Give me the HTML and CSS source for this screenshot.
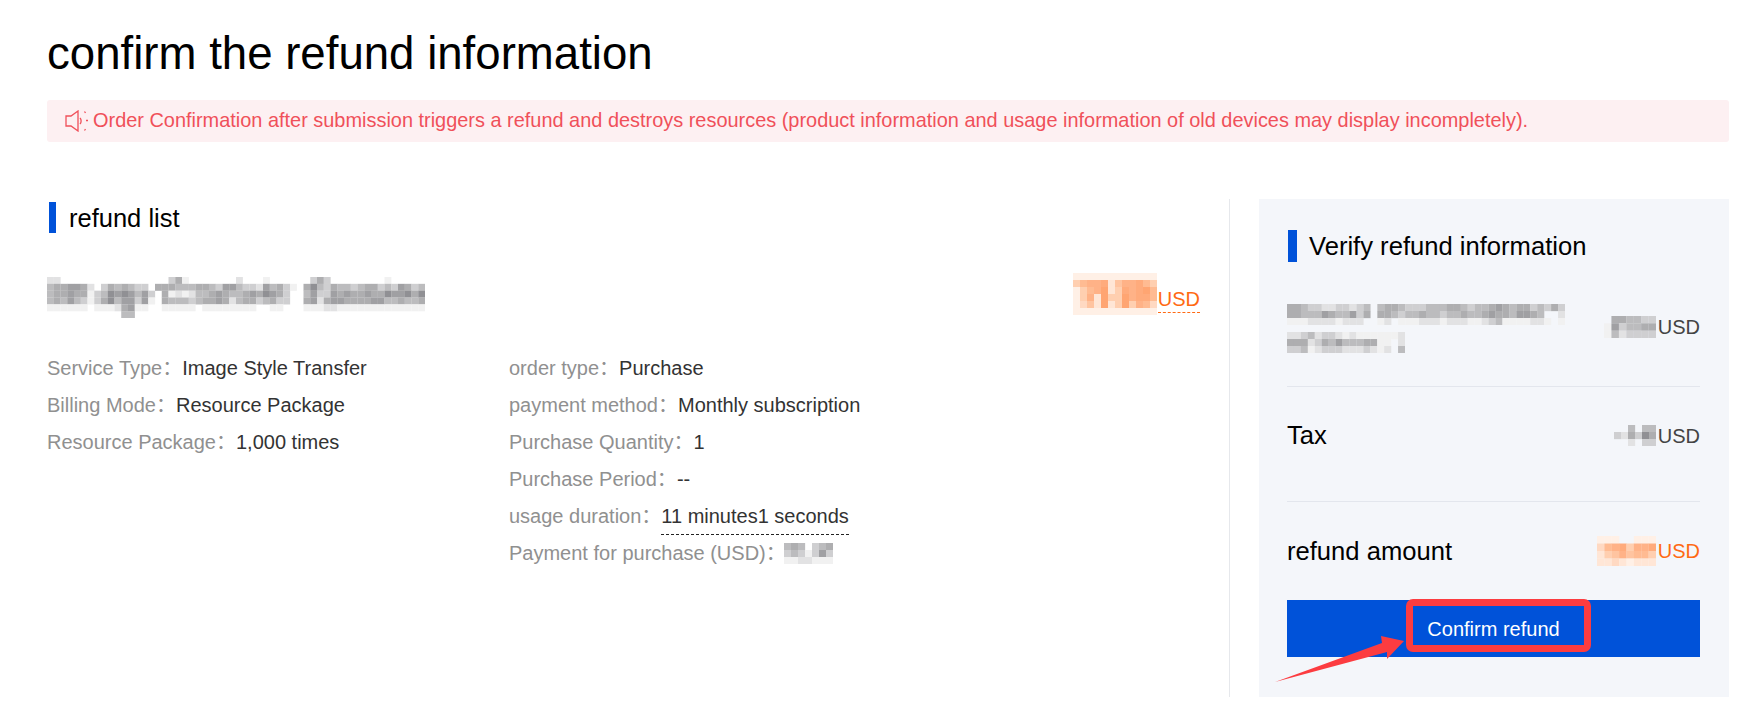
FILE: index.html
```html
<!DOCTYPE html>
<html lang="en">
<head>
<meta charset="utf-8">
<title>confirm the refund information</title>
<link rel="stylesheet" href="styles.css">
</head>
<body>
<main class="page">
  <h1 class="page-title">confirm the refund information</h1>
  <div class="notice">
    <svg class="notice-icon" width="24" height="22" viewBox="0 0 24 22" fill="none" stroke="currentColor" stroke-width="1.3">
      <path d="M1 6h5l7-5v20l-7-5H1z"/>
      <path d="M15 8c1.500 1.500 1.500 4.500 0 6"/>
      <path d="M19.500 1.500l1 1.500M21 10.500h2M19.500 20.500l1-1.500"/>
    </svg>
    <span class="notice-text">Order Confirmation after submission triggers a refund and destroys resources (product information and usage information of old devices may display incompletely).</span>
  </div>
  <div class="content">
    <section class="list">
      <h2 class="section-title">refund list</h2>
      <div class="product">
        <span class="mosaic product-name" data-cell="6.75" data-rows="22000000000000000035100000002000100000035300000000100000/45566520354543305554445543664332645310574354434553436534/45565513476764630512124456544565765300463365655655766757/45464313574663610544434556524553453300562566555566445445/11111101112561100111110111111110011000111221111111111111/00000000000440000000000000000000000000000000000000000000"></span>
        <span class="price">
          <span class="mosaic" data-tone="orange" data-cell="7" data-rows="111111111111/467782577864/146792487896/147294497886/135292494763/111111111111"></span><span class="price-unit">USD</span>
        </span>
      </div>
      <div class="specs">
        <ul class="spec-col spec-col-left">
          <li><span class="label">Service Type：</span>Image Style Transfer</li>
          <li><span class="label">Billing Mode：</span>Resource Package</li>
          <li><span class="label">Resource Package：</span>1,000 times</li>
        </ul>
        <ul class="spec-col">
          <li><span class="label">order type：</span>Purchase</li>
          <li><span class="label">payment method：</span>Monthly subscription</li>
          <li><span class="label">Purchase Quantity：</span>1</li>
          <li><span class="label">Purchase Period：</span>--</li>
          <li><span class="label">usage duration：</span><span class="dashed">11 minutes1 seconds</span></li>
          <li class="spec-masked"><span class="label">Payment for purchase (USD)：</span><span class="mosaic" data-cell="7" data-rows="4540345/3431363/1122111"></span></li>
        </ul>
      </div>
    </section>
    <aside class="summary">
      <h2 class="summary-title">Verify refund information</h2>
      <div class="summary-row summary-row-first">
        <div class="mosaic-lines">
          <span class="mosaic" data-cell="6.95" data-rows="5543322332340455433344455434456545534353/5544465446350554344544344544565546654002/1112222122200120111222122211234111122101"></span>
          <span class="mosaic" data-cell="6.95" data-rows="22342332121111112/55523546444551102/33412333222321204"></span>
        </div>
        <span class="amount amount-first"><span class="mosaic" data-cell="7.400" data-rows="0554433/1634455/1423333"></span><span class="unit">USD</span></span>
      </div>
      <div class="summary-row summary-row-tax">
        <span class="summary-label">Tax</span>
        <span class="amount"><span class="mosaic" data-cell="7" data-rows="004044/325375/002033"></span><span class="unit">USD</span></span>
      </div>
      <div class="summary-row summary-row-total">
        <span class="summary-label">refund amount</span>
        <span class="amount amount-total"><span class="mosaic" data-tone="orange" data-cell="7.400" data-rows="11100111/36784778/24575664/22321222"></span><span class="unit">USD</span></span>
      </div>
      <button class="confirm" type="button">
        Confirm refund
        <span class="highlight"></span>
      </button>
      <svg class="arrow" width="132" height="50" viewBox="0 0 132 50"><path d="M1 48L108 9 107 2 130 7 113 25 113 18z"/></svg>
    </aside>
  </div>
</main>
<script src="mosaic.js"></script>
</body>
</html>
```
FILE: styles.css
```css
* { box-sizing: border-box; }
html, body { margin: 0; background: #fff; }
body {
  font-family: "Liberation Sans", "Noto Sans CJK SC", Arial, sans-serif;
  font-size: 20px;
  color: #333;
}
.page { padding: 24px 18px 0 47px; }
.page-title {
  margin: 0;
  font-size: 45.600px;
  line-height: 60px;
  font-weight: 400;
  color: #000;
}
.notice {
  display: flex;
  align-items: center;
  gap: 4px;
  height: 42px;
  margin-top: 16px;
  padding-left: 18px;
  background: #fdf0f2;
  border-radius: 3px;
  color: #f0505a;
  white-space: nowrap;
}
.notice-icon { flex: none; }
.notice-text { font-size: 19.930px; margin-top: -2px; }
.content { display: flex; margin-top: 57px; }
.list { flex: 1; min-width: 0; height: 498px; border-right: 1px solid #e6e8ec; padding-top: 3px; }
.section-title {
  margin: 0;
  padding-left: 22px;
  font-size: 25.500px;
  line-height: 32px;
  font-weight: 400;
  color: #000;
  position: relative;
}
.section-title::before {
  content: "";
  position: absolute;
  left: 2px; top: 0; bottom: 1px;
  width: 7px;
  background: #0052d9;
}
.product {
  display: flex;
  justify-content: space-between;
  padding-right: 29px;
  margin-top: 39px;
  height: 44px;
}
.product-name { margin-top: 4px; }
.price { display: flex; align-items: flex-start; }
.price-unit {
  margin-left: 1px;
  margin-top: 15px;
  height: 25px;
  line-height: 22px;
  color: #ff6a13;
  border-bottom: 1px dashed #ff6a13;
}
.mosaic { display: inline-block; flex: none; vertical-align: top; }
.mosaic svg { display: block; filter: blur(.5px); }
.specs { display: flex; margin-top: 33px; }
.spec-col { list-style: none; margin: 0; padding: 0; }
.spec-col-left { width: 462px; }
.spec-col li { height: 37px; line-height: 37px; white-space: nowrap; }
.label { color: #909090; }
.dashed { display: inline-block; height: 37px; line-height: 37px; border-bottom: 1px dashed #222; }
.spec-masked { display: flex; align-items: center; }
.spec-masked .label { margin-right: -2px; }
.summary {
  position: relative;
  flex: none;
  width: 470px;
  height: 498px;
  margin-left: 29px;
  padding: 31px 29px 0 28px;
  background: #f4f6fa;
}
.summary-title {
  position: relative;
  margin: 0;
  padding-left: 22px;
  font-size: 25.600px;
  line-height: 32px;
  font-weight: 400;
  color: #000;
}
.summary-title::before {
  content: "";
  position: absolute;
  left: 1px; top: 0; bottom: 0;
  width: 9px;
  background: #0052d9;
}
.summary-row {
  display: flex;
  justify-content: space-between;
  align-items: center;
  height: 115px;
  border-bottom: 1px solid #e3e6ed;
}
.summary-row-first { height: 125px; align-items: flex-start; padding-top: 42px; }
.summary-row-tax { padding-bottom: 17px; }
.summary-row-total { height: 98px; border-bottom: 0; }
.amount-first { margin-top: 12px; }
.mosaic-lines { display: flex; flex-direction: column; gap: 7px; }
.summary-label { font-size: 25.600px; color: #000; }
.amount { display: flex; align-items: center; color: #444; gap: 2px; }
.amount-total { color: #ff6a13; }
.unit { line-height: 22px; }
.confirm {
  position: relative;
  display: block;
  width: 100%;
  height: 57px;
  padding: 2px 0 0;
  border: 0;
  background: #0052d9;
  color: #fff;
  font: inherit;
  text-align: center;
}
.highlight {
  position: absolute;
  left: 119px;
  top: -1px;
  width: 185px;
  height: 53px;
  border: 7px solid #fc3c40;
  border-radius: 7px;
}
.arrow { position: absolute; left: 15px; top: 435px; fill: #fc3c40; }
```
FILE: mosaic.js
```js
// Draws the pixelated (redacted) blocks from rows of darkness levels.
var RAMPS = {
  grey: ["", "#f1f1f1", "#e2e2e3", "#cfcfd1", "#bcbcbe", "#aeaeb0", "#a0a0a3", "#909094", "#86868a", "#7a7a7e"],
  orange: ["", "#fff0e6", "#ffe6d6", "#ffd9c2", "#ffcfb0", "#ffc4a0", "#ffbb92", "#ffb287", "#ffab7c", "#ffa572"]
};
var NS = "http://www.w3.org/2000/svg";
document.querySelectorAll(".mosaic").forEach(function (el) {
  var rows = el.dataset.rows.split("/");
  var cell = parseFloat(el.dataset.cell);
  var ramp = RAMPS[el.dataset.tone || "grey"];
  var cols = Math.max.apply(null, rows.map(function (r) { return r.length; }));
  var svg = document.createElementNS(NS, "svg");
  svg.setAttribute("width", Math.round(cols * cell));
  svg.setAttribute("height", Math.round(rows.length * cell));
  svg.setAttribute("viewBox", "0 0 " + cols + " " + rows.length);
  svg.setAttribute("preserveAspectRatio", "none");
  rows.forEach(function (row, y) {
    row.split("").forEach(function (ch, x) {
      var level = parseInt(ch, 10);
      if (!level) return;
      var r = document.createElementNS(NS, "rect");
      r.setAttribute("x", x);
      r.setAttribute("y", y);
      r.setAttribute("width", 1.02);
      r.setAttribute("height", 1.02);
      r.setAttribute("fill", ramp[level]);
      svg.appendChild(r);
    });
  });
  el.appendChild(svg);
});
```
